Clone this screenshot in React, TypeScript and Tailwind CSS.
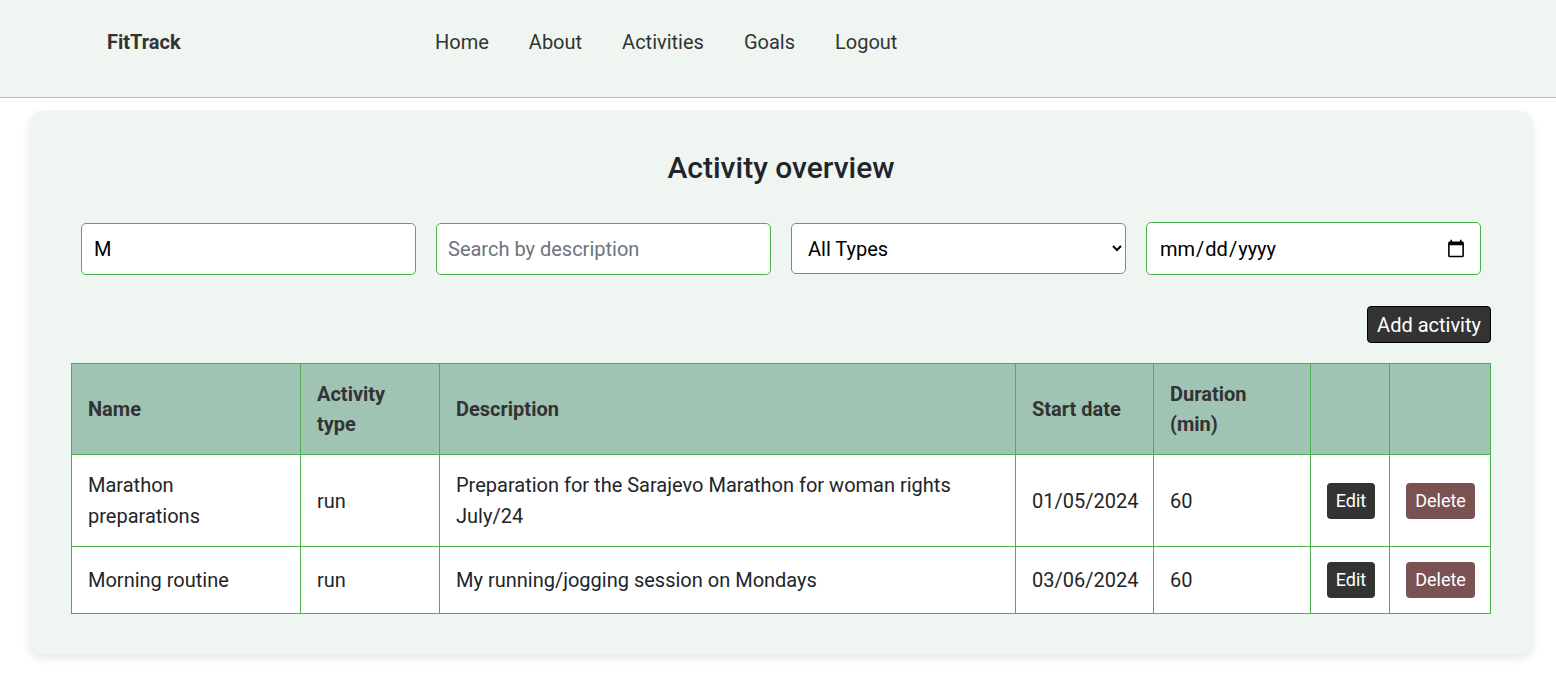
import { useState } from "react";

const activities = [
  {
    name: "Marathon preparations",
    type: "run",
    description: "Preparation for the Sarajevo Marathon for woman rights July/24",
    start: "01/05/2024",
    duration: 60,
  },
  {
    name: "Morning routine",
    type: "run",
    description: "My running/jogging session on Mondays",
    start: "03/06/2024",
    duration: 60,
  },
];

export default function App() {
  const [name, setName] = useState("M");

  return (
    <div className="min-h-screen bg-white text-[#212529] font-['Roboto',sans-serif]">
      <header className="h-[98px] bg-[#eff5f1] border-b border-[#b6bfc2] flex items-center pb-[13px]">
        <div className="w-[435px] pl-[107px] text-[20px] font-bold text-[#333]">FitTrack</div>
        <nav className="flex gap-10 text-[20px] text-[#333]">
          <a href="#">Home</a>
          <a href="#">About</a>
          <a href="#">Activities</a>
          <a href="#">Goals</a>
          <a href="#">Logout</a>
        </nav>
      </header>

      <main className="pl-[30px] pr-[24px] pt-[13px] pb-8">
        <div className="bg-[#eff5f1] rounded-xl shadow-[0_4px_10px_rgba(0,0,0,0.1)] px-[41px] pt-[40px] pb-[40px]">
          <h1 className="text-center text-[30px] font-medium text-[#212529] leading-[34px]">
            Activity overview
          </h1>

          <div className="mt-[37px] px-[10px] grid grid-cols-4 gap-5 items-center">
            <input
              value={name}
              onChange={(e) => setName(e.target.value)}
              className="h-[52px] bg-white border border-[#4caf50] rounded-[5px] px-3 text-[20px] text-black outline-none"
            />
            <input
              placeholder="Search by description"
              className="h-[52px] bg-white border border-[#4caf50] rounded-[5px] px-[11px] text-[20px] text-black placeholder:text-[#6c757d] outline-none"
            />
            <select className="h-[51px] bg-white border border-[#4caf50] rounded-[5px] pl-3 pr-2 text-[20px] text-black outline-none">
              <option>All Types</option>
              <option>run</option>
            </select>
            <input
              type="date"
              className="h-[53px] bg-white border border-[#4caf50] rounded-[5px] px-3 text-[20px] text-black outline-none"
            />
          </div>

          <div className="mt-[31px] flex justify-end">
            <button className="h-[37px] px-[9px] bg-[#333] text-white text-[20px] rounded-[4px] border border-black">
              Add activity
            </button>
          </div>

          <table className="mt-5 w-full table-fixed border-collapse text-[20px] leading-[30.2px]">
            <thead>
              <tr className="bg-[#9fc4b3] text-[#333]">
                <th className="w-[229px] border border-[#4caf50] px-4 py-[15px] text-left font-bold">Name</th>
                <th className="w-[139px] border border-[#4caf50] px-4 py-[15px] text-left font-bold">
                  Activity
                  <br />
                  type
                </th>
                <th className="border border-[#4caf50] px-4 py-[15px] text-left font-bold">Description</th>
                <th className="w-[138px] border border-[#4caf50] px-4 py-[15px] text-left font-bold">Start date</th>
                <th className="w-[157px] border border-[#4caf50] px-4 py-[15px] text-left font-bold">
                  Duration
                  <br />
                  (min)
                </th>
                <th className="w-[79px] border border-[#4caf50] px-4 py-[15px]"></th>
                <th className="w-[101px] border border-[#4caf50] px-4 py-[15px]"></th>
              </tr>
            </thead>
            <tbody className="bg-white">
              {activities.map((a) => (
                <tr key={a.name}>
                  <td className="border border-[#4caf50] px-4 py-[15px]">{a.name}</td>
                  <td className="border border-[#4caf50] px-4 py-[15px]">{a.type}</td>
                  <td className="border border-[#4caf50] px-4 py-[15px]">{a.description}</td>
                  <td className="border border-[#4caf50] px-4 py-[15px]">{a.start}</td>
                  <td className="border border-[#4caf50] px-4 py-[15px]">{a.duration}</td>
                  <td className="border border-[#4caf50] px-4 py-[15px]">
                    <button className="block h-9 w-12 bg-[#333] text-white text-[18px] rounded-[4px] leading-none">
                      Edit
                    </button>
                  </td>
                  <td className="border border-[#4caf50] px-4 py-[15px]">
                    <button className="block h-9 w-[69px] bg-[#7a5252] text-white text-[18px] rounded-[4px] leading-none">
                      Delete
                    </button>
                  </td>
                </tr>
              ))}
            </tbody>
          </table>
        </div>
      </main>
    </div>
  );
}
